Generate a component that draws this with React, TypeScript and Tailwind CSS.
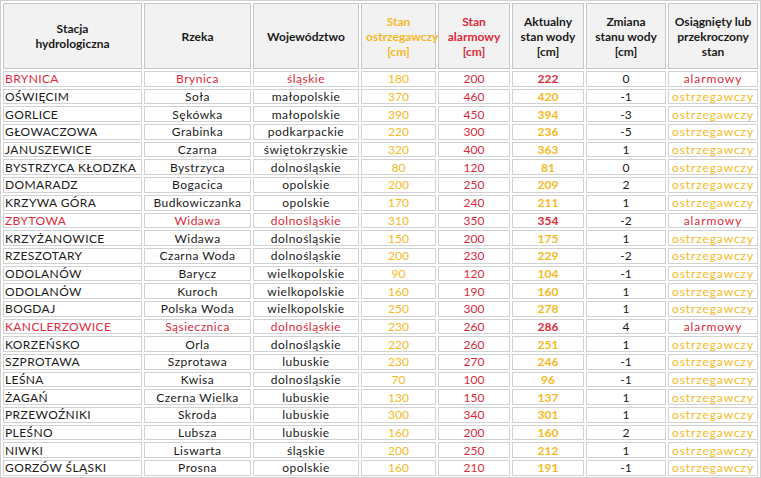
type Row = [string, string, string, number, number, number, number, boolean];

const rows: Row[] = [
  ["BRYNICA", "Brynica", "śląskie", 180, 200, 222, 0, true],
  ["OŚWIĘCIM", "Soła", "małopolskie", 370, 460, 420, -1, false],
  ["GORLICE", "Sękówka", "małopolskie", 390, 450, 394, -3, false],
  ["GŁOWACZOWA", "Grabinka", "podkarpackie", 220, 300, 236, -5, false],
  ["JANUSZEWICE", "Czarna", "świętokrzyskie", 320, 400, 363, 1, false],
  ["BYSTRZYCA KŁODZKA", "Bystrzyca", "dolnośląskie", 80, 120, 81, 0, false],
  ["DOMARADZ", "Bogacica", "opolskie", 200, 250, 209, 2, false],
  ["KRZYWA GÓRA", "Budkowiczanka", "opolskie", 170, 240, 211, 1, false],
  ["ZBYTOWA", "Widawa", "dolnośląskie", 310, 350, 354, -2, true],
  ["KRZYŻANOWICE", "Widawa", "dolnośląskie", 150, 200, 175, 1, false],
  ["RZESZOTARY", "Czarna Woda", "dolnośląskie", 200, 230, 229, -2, false],
  ["ODOLANÓW", "Barycz", "wielkopolskie", 90, 120, 104, -1, false],
  ["ODOLANÓW", "Kuroch", "wielkopolskie", 160, 190, 160, 1, false],
  ["BOGDAJ", "Polska Woda", "wielkopolskie", 250, 300, 278, 1, false],
  ["KANCLERZOWICE", "Sąsiecznica", "dolnośląskie", 230, 260, 286, 4, true],
  ["KORZEŃSKO", "Orla", "dolnośląskie", 220, 260, 251, 1, false],
  ["SZPROTAWA", "Szprotawa", "lubuskie", 230, 270, 246, -1, false],
  ["LEŚNA", "Kwisa", "dolnośląskie", 70, 100, 96, -1, false],
  ["ŻAGAŃ", "Czerna Wielka", "lubuskie", 130, 150, 137, 1, false],
  ["PRZEWOŹNIKI", "Skroda", "lubuskie", 300, 340, 301, 1, false],
  ["PLEŚNO", "Lubsza", "lubuskie", 160, 200, 160, 2, false],
  ["NIWKI", "Liswarta", "śląskie", 200, 250, 212, 1, false],
  ["GORZÓW ŚLĄSKI", "Prosna", "opolskie", 160, 210, 191, -1, false],
];

const RED = "text-[#dc2b3b]";
const YEL = "text-[#f6b925]";

// komórka nagłówka: szare tło, cienka ramka
function Th({ children, className = "" }: { children: React.ReactNode; className?: string }) {
  return (
    <th className={`h-[66px] border border-[#c6c6c6] bg-[#f2f2f2] px-1 text-center align-middle text-[12px] font-bold leading-[15px] ${className}`}>
      {children}
    </th>
  );
}

export default function App() {
  return (
    <div className="h-[478px] w-[761px] overflow-hidden border border-[#cfcfcf] bg-white" style={{ fontFamily: "Lato, 'Open Sans', sans-serif" }}>
      <table className="w-[759px] table-fixed border-separate border-spacing-[2px] text-[#1a1a1a]">
        <colgroup>
          <col className="w-[139px]" />
          <col className="w-[107px]" />
          <col className="w-[106px]" />
          <col className="w-[75px]" />
          <col className="w-[72px]" />
          <col className="w-[72px]" />
          <col className="w-[80px]" />
          <col className="w-[90px]" />
        </colgroup>
        <thead>
          <tr>
            <Th>Stacja<br />hydrologiczna</Th>
            <Th>Rzeka</Th>
            <Th>Województwo</Th>
            <Th className={YEL}>Stan<br />ostrzegawczy<br />[cm]</Th>
            <Th className={RED}>Stan<br />alarmowy<br />[cm]</Th>
            <Th>Aktualny<br />stan wody<br />[cm]</Th>
            <Th>Zmiana<br />stanu wody<br />[cm]</Th>
            <Th>Osiągnięty lub<br />przekroczony<br />stan</Th>
          </tr>
        </thead>
        <tbody className="text-[12px] leading-[13px]">
          {rows.map(([st, rz, woj, ostrz, alarm, akt, zm, isAlarm], i) => {
            const c = isAlarm ? RED : "";
            const td = "h-[15.7px] border border-[#d2d2d2] p-0 whitespace-nowrap";
            return (
              <tr key={i}>
                <td className={`${td} pl-[1px] text-left tracking-[0.4px] ${c}`}>{st}</td>
                <td className={`${td} text-center tracking-[0.5px] ${c}`}>{rz}</td>
                <td className={`${td} text-center tracking-[0.5px] ${c}`}>{woj}</td>
                <td className={`${td} text-center ${YEL}`}>{ostrz}</td>
                <td className={`${td} text-center ${RED}`}>{alarm}</td>
                <td className={`${td} text-center font-bold ${isAlarm ? RED : YEL}`}>{akt}</td>
                <td className={`${td} text-center`}>{zm}</td>
                <td className={`${td} text-center tracking-[0.9px] ${isAlarm ? RED : YEL}`}>
                  {isAlarm ? "alarmowy" : "ostrzegawczy"}
                </td>
              </tr>
            );
          })}
        </tbody>
      </table>
    </div>
  );
}
